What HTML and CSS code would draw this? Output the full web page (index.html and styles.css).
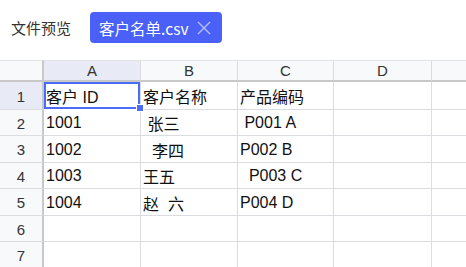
FILE: index.html
```html
<!DOCTYPE html>
<html lang="zh">
<head>
<meta charset="utf-8">
<link rel="stylesheet" href="styles.css">
</head>
<body>
<div class="topbar">
  <span class="title">文件预览</span>
  <div class="tab">
    <span class="tab-name">客户名单.csv</span>
    <svg class="tab-close" width="14" height="14" viewBox="0 0 14 14"><path d="M1 1 L13 13 M13 1 L1 13" stroke="currentColor" stroke-width="1.4" fill="none"/></svg>
  </div>
</div>
<div class="sheet">
  <div class="corner"></div>
  <div class="ch sel">A</div>
  <div class="ch">B</div>
  <div class="ch">C</div>
  <div class="ch">D</div>
  <div class="ch last"></div>

  <div class="rh sel">1</div>
  <div class="c active">客户 ID</div>
  <div class="c">客户名称</div>
  <div class="c">产品编码</div>
  <div class="c"></div>
  <div class="c last"></div>

  <div class="rh">2</div>
  <div class="c">1001</div>
  <div class="c"> 张三</div>
  <div class="c"> P001 A</div>
  <div class="c"></div>
  <div class="c last"></div>

  <div class="rh">3</div>
  <div class="c">1002</div>
  <div class="c">  李四</div>
  <div class="c">P002 B</div>
  <div class="c"></div>
  <div class="c last"></div>

  <div class="rh">4</div>
  <div class="c">1003</div>
  <div class="c">王五</div>
  <div class="c">  P003 C</div>
  <div class="c"></div>
  <div class="c last"></div>

  <div class="rh">5</div>
  <div class="c">1004</div>
  <div class="c">赵  六</div>
  <div class="c">P004 D</div>
  <div class="c"></div>
  <div class="c last"></div>

  <div class="rh">6</div>
  <div class="c"></div>
  <div class="c"></div>
  <div class="c"></div>
  <div class="c"></div>
  <div class="c last"></div>

  <div class="rh">7</div>
  <div class="c"></div>
  <div class="c"></div>
  <div class="c"></div>
  <div class="c"></div>
  <div class="c last"></div>
</div>
</body>
</html>
```
FILE: styles.css
```css
* { box-sizing: border-box; }
html, body { margin: 0; padding: 0; background: #fff; overflow: hidden; }
body {
  font-family: "Liberation Sans", "Noto Sans CJK SC", sans-serif;
  color: #222;
  width: 466px;
  height: 267px;
}
.topbar {
  height: 60px;
  padding: 12px 0 0 11px;
  display: flex;
  align-items: flex-start;
}
.title {
  height: 31px;
  display: flex;
  align-items: center;
  font-size: 15px;
  color: #333;
  font-family: "Noto Sans CJK SC", sans-serif;
}
.tab {
  margin-left: 19px;
  height: 31px;
  width: 132px;
  background: #4a60f6;
  border-radius: 4px;
  display: flex;
  align-items: center;
  padding: 0 11px 0 9px;
  color: #fff;
}
.tab-name {
  font-size: 15.5px;
  font-family: "Noto Sans CJK SC", sans-serif;
  flex: 1;
  white-space: nowrap;
}
.tab-close { color: #b9c2fb; }
.sheet {
  display: grid;
  grid-template-columns: 44px 97px 97px 96px 98px 1fr;
  grid-template-rows: 22px 28px 26px 27px 26px 27px 26px 26px;
  font-size: 16px;
}
.corner, .ch {
  background: #f8f9fa;
  border-top: 1px solid #e3e3e3;
  border-right: 1px solid #dadce0;
  border-bottom: 2px solid #c8c8c8;
}
.corner { border-right: 2px solid #c8c8c8; }
.ch {
  display: flex;
  align-items: center;
  justify-content: center;
  font-size: 15px;
  color: #333;
}
.ch.sel, .rh.sel { background: #e8eaf6; }
.ch.last, .c.last { border-right: none; }
.rh {
  background: #f8f9fa;
  border-right: 2px solid #c8c8c8;
  border-bottom: 1px solid #dadce0;
  display: flex;
  align-items: center;
  justify-content: center;
  padding-top: 1px;
  font-size: 15px;
  color: #333;
}
.c {
  border-right: 1px solid #dadce0;
  border-bottom: 1px solid #dadce0;
  display: flex;
  align-items: center;
  padding: 1px 0 0 2px;
  white-space: pre;
  color: #111;
  position: relative;
}
.c.active {
  box-shadow: inset 0 0 0 2px #4a6cf6;
  border-bottom-color: transparent;
}
.c.active::after {
  content: "";
  position: absolute;
  right: -4px;
  bottom: -3px;
  width: 6px;
  height: 6px;
  background: #4a6cf6;
  border: 1px solid #fff;
  z-index: 2;
}
```
